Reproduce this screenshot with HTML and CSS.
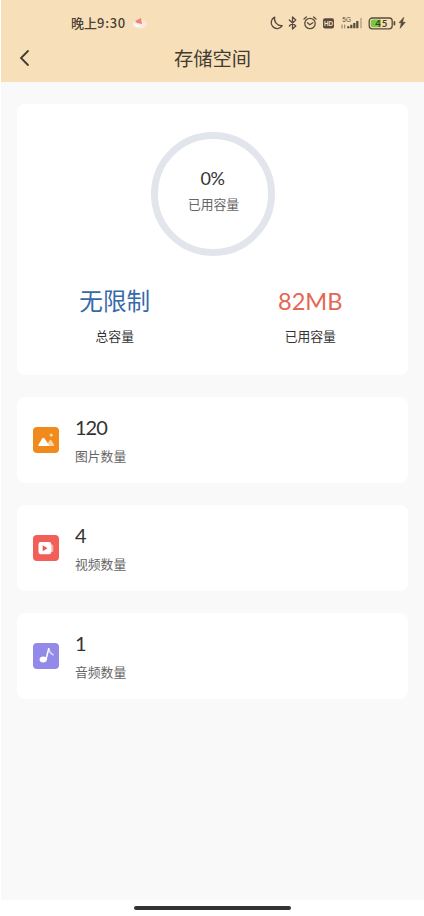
FILE: index.html
```
<!DOCTYPE html>
<html lang="zh-CN">
<head>
<meta charset="utf-8">
<title>存储空间</title>
<link rel="stylesheet" href="styles.css">
</head>
<body>
<div class="screen">
  <header class="header">
    <div class="status">
      <span class="time">晚上<span class="clock">9:30</span></span>
      <svg class="notice" width="16" height="12" viewBox="0 0 16 12"><ellipse cx="7.5" cy="7" rx="7" ry="4.5" fill="#fae9dc"/><path d="M3 4l6-3 1 6-5-1z" fill="#e98777"/><path d="M2 7l5 1 1 2-5-1z" fill="#fff"/></svg>
      <svg class="indicators" width="138" height="18" viewBox="0 0 138 18" fill="none" stroke="#584b3c" stroke-width="1.3" stroke-linecap="round" stroke-linejoin="round">
        <path d="M5.7 3.1A6 6 0 1 0 13.3 11.7A7 7 0 0 1 5.7 3.1Z"/>
        <path d="M20.3 6l6.5 6-3.3 3V3l3.3 3-6.5 6"/>
        <circle cx="41" cy="9.5" r="5.2"/><path d="M38.5 8.8l2.3 2 3-2M35 5l2.4-2M47 5l-2.4-2"/>
        <rect x="54" y="4.2" width="11" height="10.4" rx="2" fill="#584b3c" stroke="none"/>
        <text x="55" y="11.7" class="hd">HD</text>
        <text x="73.3" y="7.6" class="network">5G</text>
        <path d="M73 11v3M75.7 11v3" stroke-width=".7"/>
        <path d="M79.3 12.3v2M82.3 10.8v3.5M85.3 9V14.3M88.3 7V14.3" stroke-width="2.2" stroke-linecap="butt"/>
        <path d="M92 4v10.3" stroke="#a6967f" stroke-width="1.2" stroke-linecap="butt"/>
        <rect x="100.2" y="4" width="23" height="10.8" rx="3"/>
        <path d="M104 5.5h8v7.8h-8q-2.3 0-2.3-2.3V7.8q0-2.3 2.3-2.3z" fill="#79c744" stroke="none"/>
        <path d="M125.4 8v2.5" stroke-width="1.8"/>
        <text x="106.2" y="12.7" class="charge">45</text>
        <path d="M134.5 3.7l-4.4 5h2.3l-1.2 5.6 5-6h-2.5z" fill="#584b3c" stroke-width=".7"/>
      </svg>
    </div>
    <div class="navbar">
      <svg class="back" width="12" height="18" viewBox="0 0 12 18"><path d="M9 2L2 9l7 7" fill="none" stroke="#433b31" stroke-width="1.8" stroke-linecap="round"/></svg>
      <h1 class="title">存储空间</h1>
    </div>
  </header>
  <main class="content">
    <section class="card summary">
      <div class="ring">
        <div class="percent">0%</div>
        <div class="ring-label">已用容量</div>
      </div>
      <div class="totals">
        <div class="total"><div class="amount blue">无限制</div><div class="total-label">总容量</div></div>
        <div class="total"><div class="amount red">82MB</div><div class="total-label">已用容量</div></div>
      </div>
    </section>
    <section class="card item">
      <svg class="icon" width="26" height="26" viewBox="0 0 26 26"><rect width="26" height="26" rx="4" fill="#f08a1d"/><path d="M13.5 19l3-5.7q1-1.3 2 0l2.7 4.7q.3 1-.8 1z" fill="#fbd3a4"/><path d="M6 19q-1.2 0-.5-1.2l3.8-6.5q1-1.3 2 0l4.6 6.5q.7 1.2-.5 1.2z" fill="#fff"/><circle cx="18.2" cy="8" r="1.6" fill="#fbdcb8"/></svg>
      <div class="info"><div class="count">120</div><div class="label">图片数量</div></div>
    </section>
    <section class="card item">
      <svg class="icon" width="26" height="26" viewBox="0 0 26 26"><rect width="26" height="26" rx="4" fill="#f15f58"/><rect x="16" y="9.7" width="4.3" height="7.3" rx="1" fill="#f9b1ac"/><rect x="5.5" y="7" width="12.8" height="12.2" rx="2.3" fill="#fff"/><path d="M9.7 10.2v6l4.8-3z" fill="#e95950"/></svg>
      <div class="info"><div class="count">4</div><div class="label">视频数量</div></div>
    </section>
    <section class="card item">
      <svg class="icon" width="26" height="26" viewBox="0 0 26 26"><rect width="26" height="26" rx="4" fill="#9389e9"/><path d="M15.8 5.8q.5 3.6 4.2 6" fill="none" stroke="#d4cffa" stroke-width="1.7" stroke-linecap="round"/><ellipse cx="10.2" cy="16.5" rx="3.6" ry="3" fill="#fff"/><path d="M13 16.5l2.7-10.7" stroke="#fff" stroke-width="1.5" stroke-linecap="round"/></svg>
      <div class="info"><div class="count">1</div><div class="label">音频数量</div></div>
    </section>
  </main>
  <footer class="gesture"><div class="handle"></div></footer>
</div>
</body>
</html>
```
FILE: styles.css
```
* { box-sizing: border-box; }
body {
  margin: 0;
  background: #fff;
  color: #333;
  font-family: Lato, "Noto Sans CJK SC", sans-serif;
}
.screen {
  height: 916px;
  padding-left: 1px;
  display: flex;
  flex-direction: column;
}
.header {
  height: 82px;
  background: #f7dfba;
  padding-top: 14px;
}
.status {
  height: 18px;
  display: flex;
  align-items: center;
  padding: 0 17px 0 70px;
}
.time {
  width: 56px;
  font-size: 13px;
  line-height: 18px;
  font-weight: 500;
  color: #4b4135;
  white-space: nowrap;
}
.clock { font-family: "Noto Sans CJK SC", sans-serif; letter-spacing: .7px; }
.notice { margin-left: 5px; }
.indicators { margin-left: auto; }
.hd { font: bold 6.4px "Liberation Sans", sans-serif; fill: #f7dfba; stroke: none; }
.network { font: 6.5px "Liberation Sans", sans-serif; fill: #584b3c; stroke: none; }
.charge { font: bold 9.5px Lato, sans-serif; letter-spacing: 1px; fill: #463d28; stroke: none; }
.navbar {
  height: 50px;
  display: grid;
  grid-template-columns: 50px 1fr 50px;
  align-items: start;
}
.back { margin: 17px 0 0 18px; }
.title {
  margin: 13px 0 0;
  text-align: center;
  font-size: 19.3px;
  line-height: 28px;
  font-weight: 400;
  color: #433b31;
}
.content {
  flex: 1;
  background: #f9f9f9;
  padding: 22px 16px 0;
  display: flex;
  flex-direction: column;
  gap: 22px;
}
.card { background: #fff; border-radius: 8px; }
.summary { height: 271px; padding-top: 28px; }
.ring {
  width: 124px;
  height: 124px;
  margin: 0 auto;
  border: 7px solid #e2e6ec;
  border-radius: 50%;
  padding-top: 27px;
  text-align: center;
}
.percent { font-size: 18px; line-height: 24px; letter-spacing: -.4px; }
.ring-label { font-size: 12.8px; line-height: 18px; margin-top: 5px; padding-left: 2px; color: #666; }
.totals { display: grid; grid-template-columns: 1fr 1fr; margin-top: 28px; text-align: center; }
.amount { font-size: 23.6px; line-height: 34px; }
.blue { color: #3768aa; }
.red { color: #e56653; }
.total-label { font-size: 12.8px; line-height: 18px; margin-top: 9px; }
.item { height: 86px; display: flex; padding-left: 16px; }
.icon { margin-top: 30px; flex: none; }
.info { margin-left: 16px; padding-top: 17px; }
.count { font-size: 20px; line-height: 26px; letter-spacing: -1px; }
.label { font-size: 12.8px; line-height: 18px; margin-top: 7px; color: #666; }
.gesture { height: 16px; display: flex; justify-content: center; padding-top: 6px; }
.handle { width: 157px; height: 4px; border-radius: 2px; background: #333; }
```
